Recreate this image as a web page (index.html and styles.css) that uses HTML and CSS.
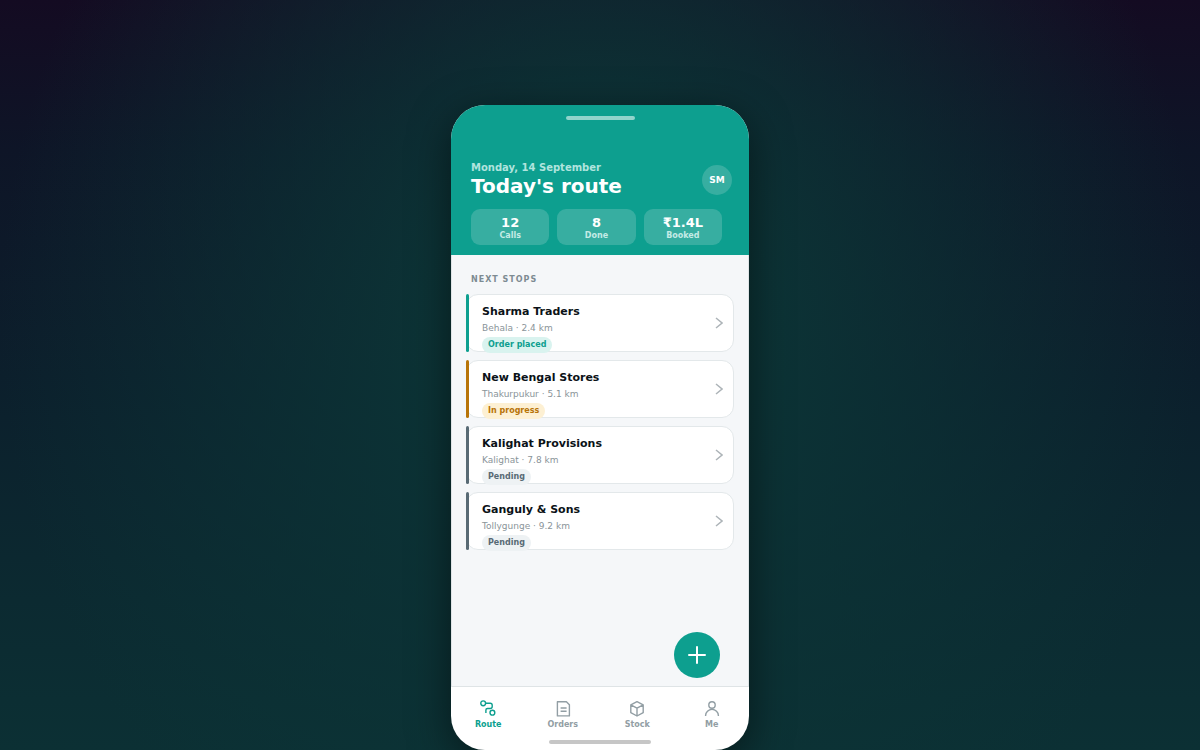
FILE: index.html
```html
<!DOCTYPE html>
<html lang="en">
<head>
    <meta charset="UTF-8">
    <meta name="viewport" content="width=device-width, initial-scale=1.0">
    <title>Today's route</title>
    <link rel="stylesheet" href="styles.css">
</head>
<body>
    <div class="phone">
        <header class="header">
            <div class="speaker"></div>
            <div class="header-row">
                <div>
                    <p class="date">Monday, 14 September</p>
                    <h1>Today's route</h1>
                </div>
                <button class="avatar">SM</button>
            </div>
            <div class="stats">
                <div class="stat"><b>12</b><span>Calls</span></div>
                <div class="stat"><b>8</b><span>Done</span></div>
                <div class="stat"><b>₹1.4L</b><span>Booked</span></div>
            </div>
        </header>

        <main class="content">
            <h2>NEXT STOPS</h2>
            <div class="stops">
                <a href="#" class="stop placed">
                    <div class="stop-info">
                        <h3>Sharma Traders</h3>
                        <p>Behala · 2.4 km</p>
                        <span class="badge">Order placed</span>
                    </div>
                    <svg class="chevron" viewBox="0 0 8 12"><path d="M1 1l6 5-6 5"/></svg>
                </a>
                <a href="#" class="stop progress">
                    <div class="stop-info">
                        <h3>New Bengal Stores</h3>
                        <p>Thakurpukur · 5.1 km</p>
                        <span class="badge">In progress</span>
                    </div>
                    <svg class="chevron" viewBox="0 0 8 12"><path d="M1 1l6 5-6 5"/></svg>
                </a>
                <a href="#" class="stop pending">
                    <div class="stop-info">
                        <h3>Kalighat Provisions</h3>
                        <p>Kalighat · 7.8 km</p>
                        <span class="badge">Pending</span>
                    </div>
                    <svg class="chevron" viewBox="0 0 8 12"><path d="M1 1l6 5-6 5"/></svg>
                </a>
                <a href="#" class="stop pending">
                    <div class="stop-info">
                        <h3>Ganguly &amp; Sons</h3>
                        <p>Tollygunge · 9.2 km</p>
                        <span class="badge">Pending</span>
                    </div>
                    <svg class="chevron" viewBox="0 0 8 12"><path d="M1 1l6 5-6 5"/></svg>
                </a>
            </div>
            <button class="fab" aria-label="Add stop">
                <svg viewBox="0 0 18 18"><path d="M9 1v16M1 9h16"/></svg>
            </button>
        </main>

        <nav class="tabs">
            <a href="#" class="tab active">
                <svg viewBox="0 0 18 18"><circle cx="4.2" cy="3.3" r="2.4"/><circle cx="13.4" cy="12.7" r="2.4"/><path d="M6.6 3.3h4.6a2 2 0 0 1 2 2v1.2a2 2 0 0 1-2 2H8.5a1.6 1.6 0 0 0-1.6 1.6v2.8"/></svg>
                Route
            </a>
            <a href="#" class="tab">
                <svg viewBox="0 0 18 18"><path d="M3.4 1.7h9l3 3v11.2h-12zM6.6 8h6M6.6 11.3h6"/></svg>
                Orders
            </a>
            <a href="#" class="tab">
                <svg viewBox="0 0 18 18"><path d="M9 1.6l6.2 3.3v7.8L9 16l-6.2-3.3V4.9zM2.8 4.9L9 8.2l6.2-3.3M9 8.2V16"/></svg>
                Stock
            </a>
            <a href="#" class="tab">
                <svg viewBox="0 0 18 18"><circle cx="9" cy="5" r="3.2"/><path d="M2.6 16v-.6a6.4 6 0 0 1 12.8 0v.6"/></svg>
                Me
            </a>
        </nav>
        <div class="home-bar"></div>
    </div>
</body>
</html>
```

FILE: styles.css
```css
* {
    box-sizing: border-box;
    margin: 0;
    padding: 0;
}
body {
    display: flex;
    flex-direction: column;
    align-items: center;
    min-height: 100vh;
    padding-top: 105px;
    font-family: "DejaVu Sans", sans-serif;
    background:
        radial-gradient(ellipse 600px 680px at 50% 42%, #0c3838 0%, rgba(12, 54, 55, 0.85) 30%, rgba(12, 44, 50, 0) 100%),
        linear-gradient(#140b22 0%, #0e1527 20%, #0c1f2c 50%, #0c2a31 80%, #0c3034 100%);
}
a {
    text-decoration: none;
    color: inherit;
}
button {
    border: none;
    font-family: inherit;
    color: white;
    cursor: pointer;
}
svg {
    fill: none;
    stroke: currentColor;
}
.phone {
    position: relative;
    display: flex;
    flex-direction: column;
    flex: 1;
    width: 100%;
    max-width: 298px;
    border-radius: 34px;
    overflow: hidden;
    background: white;
    box-shadow: 0 10px 40px rgba(0, 0, 0, 0.5);
}
.header {
    padding: 11px 0 10px;
    background: #0d9f8f;
    color: white;
}
.speaker {
    width: 69px;
    height: 4px;
    margin: 0 auto 42px;
    border-radius: 2px;
    background: rgba(255, 255, 255, 0.55);
}
.header-row {
    display: flex;
    justify-content: space-between;
    align-items: center;
    padding: 0 17px 0 20px;
}
.date {
    font-size: 10px;
    line-height: 12px;
    font-weight: bold;
    color: #b0e4de;
}
h1 {
    font-size: 20px;
    line-height: 24px;
}
.avatar {
    width: 30px;
    height: 30px;
    border-radius: 50%;
    background: #37aea1;
    font-size: 9px;
    font-weight: bold;
}
.stats {
    display: flex;
    gap: 8px;
    margin-top: 11px;
    padding: 0 27px 0 20px;
}
.stat {
    display: flex;
    flex: 1;
    flex-direction: column;
    align-items: center;
    padding: 6px 0 4px;
    border-radius: 9px;
    background: #37aea1;
}
.stat b {
    font-size: 13px;
    line-height: 16px;
}
.stat span {
    font-size: 8px;
    line-height: 10px;
    font-weight: bold;
    color: #c4ebe6;
}
.content {
    position: relative;
    flex: 1;
    padding: 19px 14px;
    background: #f5f7f9;
    border: 1px solid #dfe4e6;
    border-top: none;
}
h2 {
    margin: 0 0 8px 5px;
    font-size: 8px;
    line-height: 12px;
    letter-spacing: 1px;
    color: #7d8b92;
}
.stops {
    display: flex;
    flex-direction: column;
    gap: 8px;
}
.stop {
    position: relative;
    display: flex;
    justify-content: space-between;
    align-items: center;
    height: 58px;
    padding: 0 10px 0 15px;
    border: 1px solid #e3e8ea;
    border-radius: 12px;
    background: white;
}
.stop::before {
    content: '';
    position: absolute;
    top: -1px;
    bottom: -1px;
    left: -1px;
    width: 3px;
    border-radius: 2px;
    background: #586a74;
}
.stop-info {
    align-self: flex-start;
    padding-top: 9px;
}
h3 {
    font-size: 11px;
    line-height: 16px;
    color: #0b1217;
}
.stop p {
    font-size: 9px;
    line-height: 17px;
    color: #8a9499;
}
.badge {
    display: block;
    width: fit-content;
    padding: 0 6px;
    border-radius: 8px;
    font-size: 8px;
    line-height: 16px;
    font-weight: bold;
    color: #586a74;
    background: #eef2f4;
}
.placed::before {
    background: #0d9f8f;
}
.placed .badge {
    color: #0d9f8f;
    background: #d9f3ef;
}
.progress::before {
    background: #b87408;
}
.progress .badge {
    color: #b87408;
    background: #fdf0d3;
}
.chevron {
    width: 8px;
    height: 12px;
    color: #adb4b8;
    stroke-width: 1.5;
}
.fab {
    position: absolute;
    right: 28px;
    bottom: 8px;
    display: grid;
    place-items: center;
    width: 46px;
    height: 46px;
    border-radius: 50%;
    background: #0d9f8f;
}
.fab svg {
    width: 18px;
    height: 18px;
    stroke-width: 2;
    stroke-linecap: round;
}
.tabs {
    display: flex;
    padding: 13px 0 9px;
}
.tab {
    display: flex;
    flex: 1;
    flex-direction: column;
    align-items: center;
    gap: 1px;
    font-size: 8px;
    line-height: 12px;
    font-weight: bold;
    color: #929ea4;
}
.tab svg {
    width: 18px;
    height: 18px;
    stroke-width: 1.4;
    stroke-linejoin: round;
}
.tab.active {
    color: #0d9f8f;
}
.home-bar {
    width: 102px;
    height: 4px;
    margin: 0 auto 6px;
    border-radius: 2px;
    background: #c6c6c6;
}
```
